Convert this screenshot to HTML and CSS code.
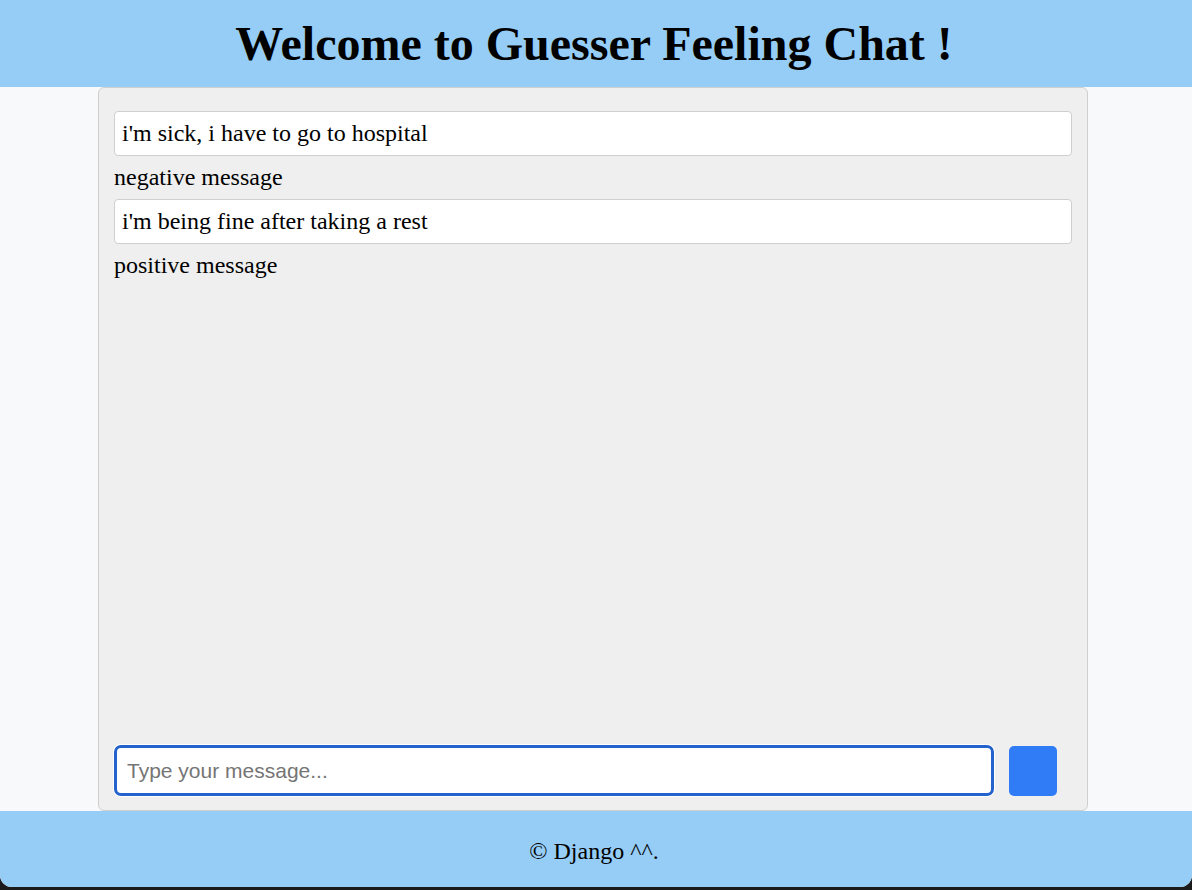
FILE: index.html
```html
<!DOCTYPE html>
<html lang="en">
<head>
<meta charset="utf-8">
<title>Guesser Feeling Chat</title>
<link rel="stylesheet" href="styles.css">
</head>
<body>
<div class="window">
  <header class="site-header">
    <h1 class="title">Welcome to Guesser Feeling Chat !</h1>
  </header>
  <main class="main">
    <section class="chat">
      <div class="messages">
        <div class="msg-box">i'm sick, i have to go to hospital</div>
        <div class="msg-label">negative message</div>
        <div class="msg-box">i'm being fine after taking a rest</div>
        <div class="msg-label">positive message</div>
      </div>
      <form class="composer">
        <input class="composer-input" type="text" placeholder="Type your message...">
        <button class="send-btn" type="button"></button>
      </form>
    </section>
  </main>
  <footer class="site-footer">© Django ^^.</footer>
</div>
</body>
</html>
```

FILE: styles.css
```css
html, body {
  margin: 0;
  padding: 0;
  background: #1b1b1b;
}
.window {
  width: 1192px;
  height: 887px;
  display: flex;
  flex-direction: column;
  background: #f8f9fa;
  border-radius: 0 0 12px 12px;
  overflow: hidden;
  font-family: "Liberation Serif", "Times New Roman", serif;
  color: #000;
}
.site-header {
  height: 87px;
  background: #95cdf6;
  display: flex;
  align-items: center;
  justify-content: center;
  flex-shrink: 0;
}
.title {
  margin: 0;
  font-size: 48px;
  font-weight: bold;
  line-height: 1;
  padding-right: 4px;
}
.main {
  flex: 1;
  display: flex;
  padding: 0 104px 0 98px;
  min-height: 0;
}
.chat {
  flex: 1;
  background: #efefef;
  border: 1px solid #cfcfcf;
  border-radius: 6px;
  box-sizing: border-box;
  padding: 23px 15px 14px 15px;
  display: flex;
  flex-direction: column;
}
.messages {
  flex: 1;
  display: flex;
  flex-direction: column;
}
.msg-box {
  background: #fff;
  border: 1px solid #cfcfcf;
  border-radius: 4px;
  height: 45px;
  box-sizing: border-box;
  padding: 0 7px;
  display: flex;
  align-items: center;
  font-size: 24px;
}
.msg-label {
  font-size: 24px;
  height: 43px;
  line-height: 43px;
}
.composer {
  display: flex;
  align-items: center;
  gap: 15px;
  margin: 0;
  padding-right: 15px;
}
.composer-input {
  flex: 1;
  height: 51px;
  box-sizing: border-box;
  border: 3px solid #2563cc;
  border-radius: 7px;
  background: #fff;
  box-shadow: 0 0 0 1px #fff;
  padding: 0 10px;
  font-family: "Liberation Sans", Arial, sans-serif;
  font-size: 21px;
  color: #000;
  outline: none;
}
.composer-input::placeholder {
  color: #757575;
}
.send-btn {
  width: 48px;
  height: 50px;
  border: none;
  border-radius: 5px;
  background: #307cf6;
  padding: 0;
}
.site-footer {
  height: 76px;
  flex-shrink: 0;
  background: #95cdf6;
  display: flex;
  align-items: center;
  justify-content: center;
  font-size: 24px;
  padding: 4px 4px 0 0;
  box-sizing: border-box;
}
```
